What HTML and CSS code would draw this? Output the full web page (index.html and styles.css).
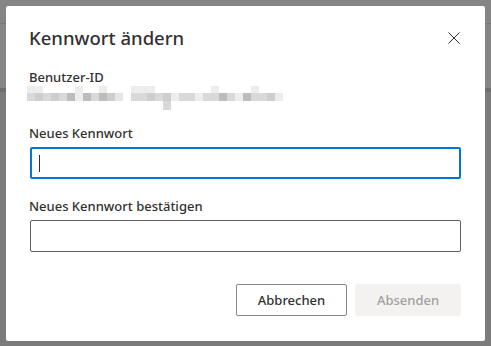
FILE: index.html
```html
<!DOCTYPE html>
<html lang="de">
<head>
  <meta charset="UTF-8" />
  <meta name="viewport" content="width=device-width, initial-scale=1.0" />
  <title>Kennwort ändern</title>
  <link rel="stylesheet" href="styles.css">
</head>
<body>
  <div class="dialog">
    <header class="dialog-head">
      <h1>Kennwort ändern</h1>
      <button class="close" aria-label="Schließen">
        <svg width="12" height="12" viewBox="0 0 12 12">
          <path d="M0.5 0.5 L11.5 11.5 M11.5 0.5 L0.5 11.5" stroke="#323130" stroke-width="1" fill="none" />
        </svg>
      </button>
    </header>

    <section class="field id-field">
      <label>Benutzer-ID</label>
      <div class="pixels">
        <div class="row top">
          <span class="s1"></span><span class="s1"></span><span></span><span></span><span></span><span></span><span class="s1"></span><span></span><span></span><span class="s1"></span><span></span><span></span><span></span><span class="s1"></span><span class="s1"></span><span class="s1"></span><span></span><span></span><span></span><span></span><span></span><span></span><span></span><span class="s1"></span><span></span><span></span><span></span><span></span><span class="s1"></span><span></span><span></span><span></span>
        </div>
        <div class="row">
          <span class="s2"></span><span class="s3"></span><span class="s2"></span><span class="s3"></span><span class="s2"></span><span class="s4"></span><span class="s1"></span><span class="s4"></span><span class="s2"></span><span class="s4"></span><span class="s3"></span><span class="s5"></span><span class="s0"></span><span class="s2"></span><span class="s2"></span><span class="s3"></span><span class="s2"></span><span class="s3"></span><span class="s1"></span><span class="s2"></span><span class="s2"></span><span class="s1"></span><span class="s2"></span><span class="s2"></span><span class="s4"></span><span class="s2"></span><span class="s1"></span><span class="s4"></span><span class="s2"></span><span class="s2"></span><span class="s3"></span><span class="s1"></span>
        </div>
        <div class="row low">
          <span></span><span></span><span></span><span></span><span></span><span></span><span></span><span></span><span></span><span></span><span></span><span></span><span></span><span></span><span></span><span></span><span></span><span class="s2"></span>
        </div>
      </div>
    </section>

    <section class="field">
      <label for="pw1">Neues Kennwort</label>
      <div class="input-wrap">
        <input type="password" id="pw1" class="focused" />
        <span class="caret"></span>
      </div>
    </section>

    <section class="field">
      <label for="pw2">Neues Kennwort bestätigen</label>
      <input type="password" id="pw2" />
    </section>

    <footer class="actions">
      <button class="btn">Abbrechen</button>
      <button class="btn primary" disabled>Absenden</button>
    </footer>
  </div>
</body>
</html>
```

FILE: styles.css
```css
html, body {
  margin: 0;
  height: 100%;
}
body {
  font-family: 'Noto Sans', sans-serif;
  color: #323130;
  padding: 6px 6px 0 6px;
  box-sizing: border-box;
  background:
    linear-gradient(#777 0, #777 1px, transparent 1px) 0 23px / 100% 1px no-repeat,
    linear-gradient(#6e6e6e 0, #6e6e6e 4px, transparent 4px) 0 88px / 100% 4px no-repeat,
    linear-gradient(#858585 0, #858585 92px, #7b7b7b 92px);
}
.dialog {
  background: white;
  width: 479px;
  height: 335px;
  border-radius: 2px;
  padding: 0 24px;
  box-sizing: border-box;
}
.dialog-head {
  display: flex;
  justify-content: space-between;
  align-items: center;
  padding-top: 18px;
  height: 28px;
  margin-bottom: 16px;
}
.dialog-head h1 {
  margin: 0 0 0 -1px;
  font-size: 18.5px;
  font-weight: 500;
  line-height: 28px;
}
.close {
  border: none;
  background: none;
  padding: 0;
  width: 12px;
  height: 12px;
  margin-right: 1px;
  display: flex;
}
.field {
  margin-bottom: 17px;
}
.field label {
  display: block;
  font-size: 13px;
  font-weight: 500;
  line-height: 20px;
  padding: 0 0 4px 0;
  margin-left: -1px;
}
.id-field {
  margin-bottom: 13px;
}
.id-field label {
  line-height: 18px;
  padding: 0;
}
.pixels {
  margin-left: -3px;
}
.row {
  display: flex;
}
.row span {
  width: 8px;
  height: 8px;
}
.row.top span {
  height: 7px;
}
.row.low span {
  height: 9px;
}
.s0 { background: #fff; }
.s1 { background: #ededed; }
.s2 { background: #d9d9d9; }
.s3 { background: #cecece; }
.s4 { background: #bcbcbc; }
.s5 { background: #e6e6e6; }
.input-wrap {
  position: relative;
}
input {
  display: block;
  width: 100%;
  height: 32px;
  box-sizing: border-box;
  border: 1px solid #605e5c;
  border-radius: 2px;
  font-family: inherit;
  font-size: 14px;
  padding: 0 8px;
  outline: none;
}
input.focused {
  border: 2px solid #0078d4;
}
.caret {
  position: absolute;
  left: 9px;
  top: 8px;
  width: 1px;
  height: 17px;
  background: #323130;
}
.actions {
  display: flex;
  justify-content: flex-end;
  gap: 8px;
  padding-top: 15px;
}
.btn {
  height: 32px;
  width: 111px;
  border: 1px solid #8a8886;
  border-radius: 2px;
  background: white;
  font-family: inherit;
  font-size: 13px;
  font-weight: 500;
  color: #323130;
}
.btn.primary {
  width: 106px;
  border-color: #f3f2f1;
  background: #f3f2f1;
  color: #a19f9d;
}
```
